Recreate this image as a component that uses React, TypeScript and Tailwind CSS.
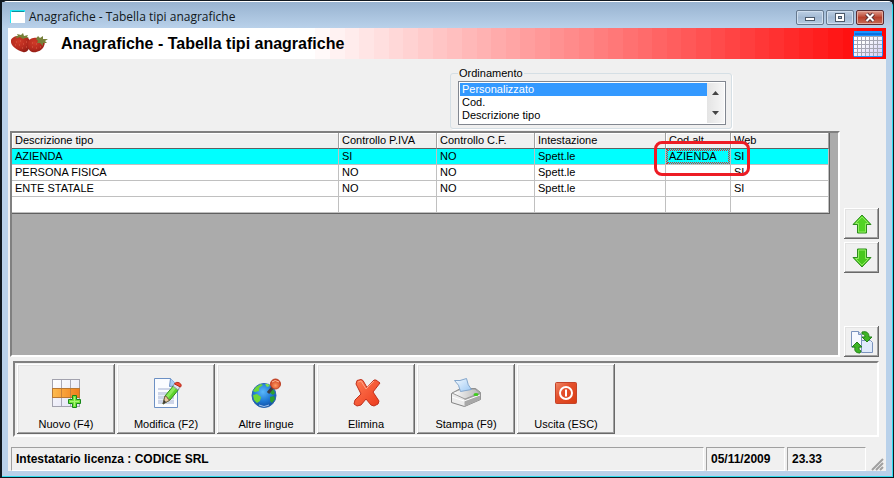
import { ReactNode } from "react";
import clsx from "clsx";

const raised =
  "bg-[#f0f0f0] shadow-[inset_-1px_-1px_#696969,inset_1px_1px_#ffffff,inset_-2px_-2px_#a0a0a0,inset_2px_2px_#e3e3e3]";
const sunkenCell =
  "border border-t-[#a0a0a0] border-l-[#a0a0a0] border-r-white border-b-white";

const BANDS = 60;
const FIRST_BAND = 21;

const rows = [
  ["AZIENDA", "SI", "NO", "Spett.le", "AZIENDA", "SI"],
  ["PERSONA FISICA", "NO", "NO", "Spett.le", "", "SI"],
  ["ENTE STATALE", "NO", "NO", "Spett.le", "", "SI"],
  ["", "", "", "", "", ""],
];

const headers = [
  "Descrizione tipo",
  "Controllo P.IVA",
  "Controllo C.F.",
  "Intestazione",
  "Cod.alt.",
  "Web",
];

const WindowIcon = () => (
  <svg width="16" height="16" viewBox="0 0 16 16" aria-hidden="true">
    <rect x="1" y="1" width="15" height="13" fill="#fff" />
    <path d="M1 14V1h15v2H2v11z" fill="#22e6f2" />
    <path d="M3 2.5h12" stroke="#0b8f9c" />
  </svg>
);

const Strawberries = () => (
  <svg width="40" height="24" viewBox="0 0 40 24" aria-hidden="true">
    <defs>
      <radialGradient id="berry" cx="40%" cy="35%" r="70%">
        <stop offset="0" stopColor="#d03a28" />
        <stop offset="0.6" stopColor="#b52a1e" />
        <stop offset="1" stopColor="#8e1c14" />
      </radialGradient>
    </defs>
    <path d="M1 8C2 4 9 3 14 4c5 1 7 5 6 10-1 4-4 7-7 6C7 18 0 14 1 8z" fill="url(#berry)" />
    <path d="M18 10c1-4 7-5 11-4 5 1 7 4 5 8-2 5-8 7-12 6-4-2-5-6-4-10z" fill="url(#berry)" />
    <path d="M5 5l3-1-1-2 4 1 2-2 1 3 4-1-1 2 2 1-4 0-2 1-3-2-3 1z" fill="#77803a" />
    <path d="M26 7l2-3 2 2 3-2 0 3 5 0-3 2 2 2-4 0 0 3-3-3-3 0 1-2z" fill="#77803a" />
    <path
      d="M6 10h1M10 9h1M5 13h1M9 13h1M13 12h1M16 10h1M12 16h1M16 15h1M22 11h1M26 12h1M22 15h1M26 16h1M30 15h1"
      stroke="#dc6048"
    />
  </svg>
);

const CalendarIcon = () => (
  <svg width="30" height="26" viewBox="0 0 30 26" aria-hidden="true">
    <defs>
      <linearGradient id="cal" x1="0" x2="1" y1="0" y2="1">
        <stop offset="0.3" stopColor="#ffffff" />
        <stop offset="1" stopColor="#cfcaf8" />
      </linearGradient>
    </defs>
    <path d="M1 0h28v5h1v19l-1 2H1l-1-2V5h1z" fill="#1a92ff" />
    <rect x="2" y="2" width="27" height="2" fill="#0a6fe0" />
    <rect x="1" y="5" width="28" height="20" fill="url(#cal)" />
    <path
      d="M1 5.5h28M1 9.5h28M1 13.5h28M1 17.5h28M1 21.5h28M4.5 5v20M8.5 5v20M12.5 5v20M16.5 5v20M20.5 5v20M24.5 5v20"
      stroke="#a5a5b3"
    />
  </svg>
);

const ArrowIcon = ({ down }: { down?: boolean }) => (
  <svg width="20" height="20" viewBox="0 0 20 20" className={clsx(down && "rotate-180")} aria-hidden="true">
    <path
      d="M10 1L19 10.500H14.500V19H5.500V10.500H1z"
      fill={down ? "#48c81c" : "#52d424"}
      stroke="#2c8c1c"
      strokeLinejoin="round"
    />
    <path d="M10 2.800L16.500 9.500H13.500V18H6.500V9.500H3.500z" fill="none" stroke="#93ec62" />
  </svg>
);

const SwapIcon = () => (
  <svg width="24" height="24" viewBox="0 0 24 24" aria-hidden="true">
    <path d="M1.500 1.500h7l3 3V17h-10z" fill="#f6f9ff" stroke="#7b93bd" />
    <path d="M8.500 1.500v3h3" fill="#bcd0ee" stroke="#7b93bd" />
    <path d="M11.500 10.500h9l2 2v10h-11z" fill="#dfeafa" stroke="#7b93bd" />
    <path d="M12 2c5-1 7 1 7 5h3l-5 5-5-5h3c0-2-1-3-3-3z" fill="#3db424" stroke="#23801a" />
    <path d="M10 23c-4 0-6-2-5-6H2l5-5 5 5H9c0 2 0 3 2 4z" fill="#3db424" stroke="#23801a" />
  </svg>
);

const NewIcon = () => (
  <svg width="32" height="32" viewBox="0 0 32 32" aria-hidden="true">
    <defs>
      <linearGradient id="cells" x1="0" x2="1" y1="0" y2="1">
        <stop offset="0" stopColor="#ffffff" />
        <stop offset="1" stopColor="#e0e0f4" />
      </linearGradient>
      <linearGradient id="orange" x1="0" x2="1">
        <stop offset="0" stopColor="#fdbc50" />
        <stop offset="1" stopColor="#f07c1c" />
      </linearGradient>
    </defs>
    <rect x="2.500" y="2.500" width="27" height="27" fill="url(#cells)" stroke="#a2a2ae" />
    <path d="M11.500 3v26M20.500 3v26" stroke="#a9a9b8" />
    <rect x="2.500" y="11.500" width="27" height="9" fill="url(#orange)" stroke="#b87835" />
    <path d="M11.500 12v8M20.500 12v8" stroke="#c8803a" />
    <path d="M22.500 18.500h4v4h4v4h-4v4h-4v-4h-4v-4h4z" fill="#74e23c" stroke="#17871a" />
    <path d="M24.500 20v9M20 24.500h9" stroke="#a6f774" />
  </svg>
);

const EditIcon = () => (
  <svg width="32" height="32" viewBox="0 0 32 32" aria-hidden="true">
    <path d="M4.500 1.500h16l7 7v22h-23z" fill="#fafcff" stroke="#6c90c4" />
    <path d="M20.500 1.500l-1 8 8-1" fill="#a9cdf4" stroke="#6c90c4" />
    <path d="M8 11h12v2H8zM8 15h16v12H8z" fill="#cdd5e8" />
    <path d="M8 18.500h16M8 22.500h16" stroke="#e9eef8" />
    <path d="M13 27l2-8 9-11 5 4-9 11z" fill="#5ed32c" stroke="#2f8a1c" />
    <path d="M17 20l8-10" stroke="#8be85c" strokeWidth="3" />
    <path d="M13 27l2-8 2 1 1 2 2 1z" fill="#e9c9a0" stroke="#79634a" />
    <path d="M13 27l1-4 2 2z" fill="#333" />
    <path d="M23 9l2-3 5 4-2 3z" fill="#dce4ee" stroke="#8c94a4" />
    <path d="M24.500 7c1-2 3-2 5-1s2 3 1 4z" fill="#f04c34" stroke="#b82a1c" />
  </svg>
);

const GlobeIcon = () => (
  <svg width="32" height="32" viewBox="0 0 32 32" aria-hidden="true">
    <defs>
      <radialGradient id="sea" cx="45%" cy="35%" r="65%">
        <stop offset="0" stopColor="#5ab8fa" />
        <stop offset="0.6" stopColor="#1f78d4" />
        <stop offset="1" stopColor="#1450a4" />
      </radialGradient>
      <radialGradient id="pin" cx="50%" cy="65%" r="60%">
        <stop offset="0" stopColor="#ff9a62" />
        <stop offset="1" stopColor="#cc3c1c" />
      </radialGradient>
    </defs>
    <circle cx="14" cy="18.500" r="12" fill="url(#sea)" stroke="#2c66b0" />
    <path d="M3 14l3-4 5-3 2 1-4 3 0 3-4 1zM3 18l4-1 4 3-1 4-3 2-3-3z" fill="#6ed636" />
    <path d="M20 11l3 1 2 4-2 2-3-2zM20 20l4-1 1 3-3 4-2-2z" fill="#2ca030" />
    <path d="M15 7l3 0 2 2-3 1z" fill="#7be048" />
    <path d="M9 28q5 3 10 0" fill="none" stroke="#9fc4ee" />
    <path d="M18 16l5-6" stroke="#3c3c44" strokeWidth="3" />
    <circle cx="25.500" cy="7" r="5" fill="url(#pin)" stroke="#bd4126" />
    <path d="M22 5q3-3 7 0" fill="none" stroke="#ffc0a0" />
  </svg>
);

const DeleteIcon = () => (
  <svg width="32" height="32" viewBox="0 0 32 32" aria-hidden="true">
    <defs>
      <linearGradient id="cross" x1="0" x2="1" y1="0" y2="1">
        <stop offset="0" stopColor="#ff7c54" />
        <stop offset="1" stopColor="#ec3a1c" />
      </linearGradient>
    </defs>
    <path
      d="M7 3.500l4-1 2 1 4 7 7-7.500h2l4 3-7 9 6 9-1 3-4 2-3-1-5-6-5 6-4 1-3-2 1-4 6-6-5-10z"
      fill="url(#cross)"
      stroke="#c0301c"
      strokeLinejoin="round"
    />
    <path d="M8 5l3-1 5 8 8-8" fill="none" stroke="#ffa284" />
  </svg>
);

const PrinterIcon = () => (
  <svg width="32" height="32" viewBox="0 0 32 32" aria-hidden="true">
    <defs>
      <linearGradient id="paper" x1="0" x2="1" y1="0" y2="1">
        <stop offset="0" stopColor="#f4faff" />
        <stop offset="1" stopColor="#9cc8f4" />
      </linearGradient>
      <linearGradient id="lid" x1="0" x2="1">
        <stop offset="0" stopColor="#ffffff" />
        <stop offset="1" stopColor="#b4b4b4" />
      </linearGradient>
    </defs>
    <path d="M1.500 16.500l9-5h15l5 4v7l-16 7-13-4z" fill="#ececec" stroke="#838383" />
    <path d="M14.500 21l16-5.500v7l-16 7z" fill="#a8a8a8" />
    <path d="M2 16l9-4h14l5 4-15 6z" fill="url(#lid)" stroke="#9a9a9a" />
    <path d="M4.500 3.500q5 1 12-2 1 7 5 11l-11 2q-1-7-6-11z" fill="url(#paper)" stroke="#83a6cc" />
    <path d="M2 20l12 4 16-6" fill="none" stroke="#fff" />
    <ellipse cx="26" cy="17.500" rx="2.500" ry="1.500" fill="#3ecb1c" />
  </svg>
);

const ExitIcon = () => (
  <svg width="32" height="32" viewBox="0 0 32 32" aria-hidden="true">
    <defs>
      <linearGradient id="exit" x1="0" x2="1" y1="0" y2="1">
        <stop offset="0" stopColor="#f08a68" />
        <stop offset="0.4" stopColor="#e4502c" />
        <stop offset="1" stopColor="#d83c12" />
      </linearGradient>
    </defs>
    <rect x="5.500" y="5.500" width="21" height="21" rx="1" fill="url(#exit)" stroke="#c4432a" />
    <circle cx="16" cy="16" r="6" fill="none" stroke="#fff" strokeWidth="2" />
    <path d="M16 12.500v7" stroke="#fff" strokeWidth="2" />
  </svg>
);

const actions = [
  { label: "Nuovo (F4)", icon: <NewIcon /> },
  { label: "Modifica (F2)", icon: <EditIcon /> },
  { label: "Altre lingue", icon: <GlobeIcon /> },
  { label: "Elimina", icon: <DeleteIcon /> },
  { label: "Stampa (F9)", icon: <PrinterIcon /> },
  { label: "Uscita (ESC)", icon: <ExitIcon /> },
];

const CaptionButton = ({ label, close, children }: { label: string; close?: boolean; children: ReactNode }) => (
  <button
    aria-label={label}
    className={clsx(
      "flex h-[15px] w-7 items-center justify-center rounded-[2px] border",
      close
        ? "border-[#5a2a30] bg-linear-to-b from-[#dd9a8c] via-[#b8402c] to-[#c86a54] shadow-[inset_0_0_0_1px_#e2a99c]"
        : "border-[#66798f] bg-linear-to-b from-[#bccfe4] via-[#a2b9d3] to-[#b5cbe2] shadow-[inset_0_0_0_1px_#d0dfef]"
    )}
  >
    <svg width="14" height="11" viewBox="0 0 14 11" aria-hidden="true">
      {children}
    </svg>
  </button>
);

const SideButton = ({ label, className, children }: { label: string; className?: string; children: ReactNode }) => (
  <button aria-label={label} className={clsx("flex h-[31px] w-[35px] items-center justify-center", raised, className)}>
    {children}
  </button>
);

const TitleBar = () => (
  <div className="flex h-[26px] items-center bg-linear-to-b from-[#98b3d0] to-[#b9d1ea] pt-1 pr-2 pl-[7px]">
    <WindowIcon />
    <span className="ml-1 flex-1 font-['Open_Sans','Noto_Sans',sans-serif] text-[12px] leading-4 text-[#101820]">
      Anagrafiche - Tabella tipi anagrafiche
    </span>
    <div className="flex gap-0.5">
      <CaptionButton label="Riduci a icona">
        <rect x="2.500" y="5.500" width="9" height="3" fill="#fff" stroke="#4c5a6b" />
      </CaptionButton>
      <CaptionButton label="Ingrandisci">
        <rect x="2.500" y="1.500" width="9" height="8" fill="#fff" stroke="#4c5a6b" />
        <rect x="5.500" y="4.500" width="3" height="2" fill="#a2b9d3" stroke="#4c5a6b" />
      </CaptionButton>
      <CaptionButton label="Chiudi" close>
        <path d="M3.500 2l7 7M10.500 2l-7 7" stroke="#5c3438" strokeWidth="4" />
        <path d="M3.500 2l7 7M10.500 2l-7 7" stroke="#fff" strokeWidth="2" />
      </CaptionButton>
    </div>
  </div>
);

const Banner = () => (
  <header className="relative flex h-[31px] items-center bg-white pr-[3px]">
    <div className="absolute inset-0 flex">
      {Array.from({ length: BANDS }, (_, i) => (
        <div
          key={i}
          className="h-full flex-1"
          style={{
            backgroundColor: `rgba(255, 0, 0, ${
              i < FIRST_BAND ? 0 : Math.min(1, ((i - FIRST_BAND + 1) / (BANDS - FIRST_BAND - 1)) * 0.96)
            })`,
          }}
        />
      ))}
    </div>
    <div className="relative flex w-full items-center">
      <div className="ml-0.5">
        <Strawberries />
      </div>
      <h1 className="ml-[11px] flex-1 text-[16px] leading-5 font-bold">Anagrafiche - Tabella tipi anagrafiche</h1>
      <CalendarIcon />
    </div>
  </header>
);

const Ordering = () => (
  <fieldset className="ml-[442px] w-[282px] rounded-[3px] border border-[#d5dfe5] pt-px pr-[5px] pb-[3px] pl-[7px] shadow-[1px_1px_#ffffff]">
    <legend className="px-px leading-[14px]">
      <label htmlFor="ordinamento">Ordinamento</label>
    </legend>
    <div className="flex h-11 border border-[#828790] bg-white p-px">
      <select
        id="ordinamento"
        size={3}
        defaultValue="Personalizzato"
        className="h-10 flex-1 overflow-hidden bg-white outline-none"
      >
        {["Personalizzato", "Cod.", "Descrizione tipo"].map((o) => (
          <option
            key={o}
            className="h-[13px] min-h-0 px-0.5 py-0 leading-[13px] checked:bg-linear-to-r checked:from-[#3399ff] checked:to-[#3399ff] checked:text-white"
          >
            {o}
          </option>
        ))}
      </select>
      <div className="flex w-[17px] flex-col justify-between bg-linear-to-r from-[#e4e4e4] to-[#f6f6f6] py-2">
        <button aria-label="Su" className="flex justify-center">
          <svg width="7" height="4" viewBox="0 0 7 4">
            <path d="M0 4l3.500-4L7 4z" fill="#444" />
          </svg>
        </button>
        <button aria-label="Giù" className="flex justify-center">
          <svg width="7" height="4" viewBox="0 0 7 4">
            <path d="M0 0l3.500 4L7 0z" fill="#444" />
          </svg>
        </button>
      </div>
    </div>
  </fieldset>
);

const DataGrid = () => (
  <div className="flex-1 border-2 border-t-[#808080] border-r-white border-b-white border-l-[#808080] bg-[#ababab]">
    <table className="w-[818px] table-fixed border-separate border-spacing-0 border-r border-b border-[#606060]">
      <colgroup>
        <col className="w-[327px]" />
        <col className="w-[98px]" />
        <col className="w-[98px]" />
        <col className="w-[131px]" />
        <col className="w-[65px]" />
        <col />
      </colgroup>
      <thead>
        <tr className="h-4">
          {headers.map((h) => (
            <th
              key={h}
              className="border-r border-b border-r-[#a0a0a0] border-b-[#606060] bg-[#f0f0f0] p-0 pl-[3px] text-left leading-[15px] font-normal shadow-[inset_1px_1px_#ffffff]"
            >
              {h}
            </th>
          ))}
        </tr>
      </thead>
      <tbody>
        {rows.map((row, r) => (
          <tr key={r} className={clsx("h-4", r === 0 ? "bg-[#00ffff]" : "bg-white")}>
            {row.map((cell, c) => (
              <td key={c} className="relative border-r border-b border-[#c0c0c0] p-0 pl-[3px] leading-[15px]">
                {cell}
                {r === 0 && c === 4 && (
                  <>
                    <div className="absolute inset-0 border border-dotted border-[#d83030] outline-1 -outline-offset-2 outline-dotted outline-[#d83030]" />
                    <div className="pointer-events-none absolute -top-2 -right-5 -bottom-3 -left-3 z-10 rounded-lg border-3 border-[#ed1c24]" />
                  </>
                )}
              </td>
            ))}
          </tr>
        ))}
      </tbody>
    </table>
  </div>
);

const App = () => (
  <div className="flex min-h-screen flex-col bg-[#101820] font-['Liberation_Sans',Arial,sans-serif] text-[11px] text-black">
    <div className="mt-px mr-px mb-px ml-0.5 flex flex-1 flex-col rounded-t-[5px] border-t border-r border-b border-t-white border-r-[#2fdcee] border-b-[#2fdcee] bg-[#b9d1ea]">
      <TitleBar />
      <div className="mr-1.5 mb-[5px] ml-1.5 flex flex-1 flex-col bg-[#f0f0f0]">
        <Banner />
        <div className="pt-[7px]">
          <Ordering />
        </div>
        <main className="mt-0.5 flex flex-1 pr-[7px] pl-0.5">
          <DataGrid />
          <div className="ml-1 flex flex-col justify-end">
            <SideButton label="Sposta su">
              <ArrowIcon />
            </SideButton>
            <SideButton label="Sposta giù" className="mt-[3px] mb-[53px]">
              <ArrowIcon down />
            </SideButton>
            <SideButton label="Aggiorna">
              <SwapIcon />
            </SideButton>
          </div>
        </main>
        <nav className="mt-1 mr-[7px] ml-[5px] flex gap-0.5 border-2 border-t-[#808080] border-r-white border-b-white border-l-[#808080] py-px pr-px pl-0.5">
          {actions.map(({ label, icon }) => (
            <button key={label} className={clsx("flex h-[70px] w-[98px] flex-col items-center justify-end pb-[3px]", raised)}>
              {icon}
              <span className="mt-2 leading-[14px]">{label}</span>
            </button>
          ))}
        </nav>
        <footer className="mt-2.5 flex h-6 gap-0.5 pr-0.5 pl-[3px] text-[12px] leading-[22px] font-bold">
          <div className={clsx("flex-1 pl-1", sunkenCell)}>Intestatario licenza : CODICE SRL</div>
          <div className={clsx("w-[79px] pl-1", sunkenCell)}>05/11/2009</div>
          <div className={clsx("w-[79px] pl-1", sunkenCell)}>23.33</div>
          <svg width="16" height="24" viewBox="0 0 16 24" aria-hidden="true">
            <path d="M4 23L15 12M8 23l7-7M12 23l3-3" stroke="#a0a0a0" strokeWidth="2" />
          </svg>
        </footer>
      </div>
    </div>
  </div>
);

export default App;
